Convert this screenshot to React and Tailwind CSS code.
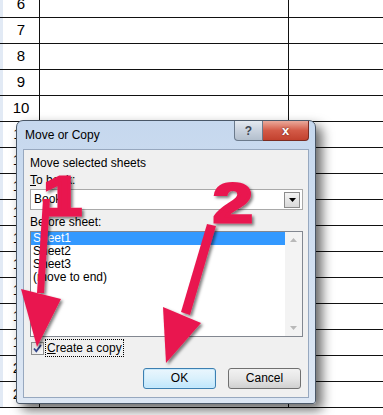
import React from "react";

const rows = [6, 7, 8, 9, 10, 11, 12, 13, 14, 15, 16, 17, 18, 19, 20, 21];

const Sheet = () => (
    <div className="flex flex-col mt-[-8px]">
        {rows.map((n) => (
            <div key={n} className="flex h-[26px] border-b border-[#111] box-border">
                <div className="w-[3px] bg-[#e2eaf5]" />
                <div className="w-[37px] border-r border-[#111] flex items-center justify-center text-[15px] text-black">
                    {n}
                </div>
                <div className="w-[249px] border-r border-[#111]" />
                <div className="flex-1" />
            </div>
        ))}
    </div>
);

const TitleButtons = () => (
    <div className="flex h-[20px] ml-auto">
        <div className="w-[29px] h-full border border-[#6b7a8c] border-t-0 rounded-bl-[4px] bg-gradient-to-b from-[#e4e9f0] via-[#c9d2de] to-[#b3bfcd] flex items-center justify-center text-[12px] font-bold text-[#3d4652]">
            ?
        </div>
        <div className="w-[46px] h-full border border-[#7a2c22] border-t-0 border-l-0 rounded-br-[4px] bg-gradient-to-b from-[#e9a99b] via-[#d35a47] to-[#c2412e] flex items-center justify-center text-[13px] font-bold text-white [text-shadow:0_0_2px_#5a1a10]">
            x
        </div>
    </div>
);

const Dialog = () => (
    <div className="absolute left-[16px] top-[120px] w-[300px] h-[284px] border border-[#4b5868] rounded-t-[7px] rounded-b-[3px] bg-gradient-to-b from-[#c6d8ee] to-[#dde7f4] shadow-[6px_6px_12px_rgba(0,0,0,0.6)] flex flex-col px-[6px] pb-[5px]">
        <div className="flex h-[28px] items-start">
            <span className="mt-[7px] ml-[2px] text-[12px] leading-[15px] text-black">Move or Copy</span>
            <TitleButtons />
        </div>

        <div className="flex-1 border border-[#97a8bf] bg-[#f0f0f0] flex flex-col pl-[6px] pr-[5px] pt-[6px] text-[12px] leading-[15px] text-black">
            <div>Move selected sheets</div>
            <div className="mt-[2px]"><span className="underline">T</span>o book:</div>

            <div className="mt-[1px] h-[21px] border border-[#a9a9a9] bg-white flex items-center pl-[3px] pr-[2px]">
                <span>Book1</span>
                <div className="ml-auto w-[16px] h-[16px] border border-[#8c8c8c] bg-gradient-to-b from-[#f4f4f4] to-[#d9d9d9] flex items-center justify-center">
                    <svg width="7" height="4" viewBox="0 0 7 4"><path d="M0 0h7L3.5 4z" fill="#000" /></svg>
                </div>
            </div>

            <div className="mt-[5px]">Be<span className="underline">f</span>ore sheet:</div>

            <div className="mt-[1px] h-[106px] border border-[#828790] bg-white flex">
                <div className="flex-1 flex flex-col leading-[13px]">
                    <div className="bg-[#3399ff] text-white pl-[2px] h-[13px]">Sheet1</div>
                    <div className="pl-[2px] h-[13px]">Sheet2</div>
                    <div className="pl-[2px] h-[13px]">Sheet3</div>
                    <div className="pl-[2px] h-[13px]">(move to end)</div>
                </div>
                <div className="w-[17px] bg-[#f3f3f3] flex flex-col items-center justify-between py-[6px]">
                    <svg width="7" height="4" viewBox="0 0 7 4"><path d="M0 4h7L3.5 0z" fill="#b9b9b9" /></svg>
                    <svg width="7" height="4" viewBox="0 0 7 4"><path d="M0 0h7L3.5 4z" fill="#b9b9b9" /></svg>
                </div>
            </div>

            <div className="mt-[2px] h-[18px] flex items-center">
                <div className="ml-[1px] w-[13px] h-[13px] border border-[#8e8f8f] bg-gradient-to-br from-[#dcdcdc] to-[#fbfbfb] flex items-center justify-center">
                    <svg width="9" height="9" viewBox="0 0 9 9"><path d="M1 4.5l2.3 2.8L8 1" stroke="#33468a" strokeWidth="1.8" fill="none" /></svg>
                </div>
                <div className="ml-[1px] px-[1px] h-[18px] border border-dotted border-black flex items-center">
                    <span className="underline">C</span>reate a copy
                </div>
            </div>

            <div className="mt-[11px] flex justify-end gap-[12px] mr-[2px]">
                <div className="w-[73px] h-[21px] rounded-[3px] border border-[#3c7fb1] bg-gradient-to-b from-[#eaf6fd] via-[#d9f0fc] to-[#bee6fd] shadow-[inset_0_0_0_1px_#c8e9fb] flex items-center justify-center">
                    OK
                </div>
                <div className="w-[73px] h-[21px] rounded-[3px] border border-[#707070] bg-gradient-to-b from-[#f2f2f2] via-[#e6e6e6] to-[#d0d0d0] flex items-center justify-center">
                    Cancel
                </div>
            </div>
        </div>
    </div>
);

const Arrows = () => (
    <svg className="absolute inset-0 pointer-events-none" width="383" height="415" viewBox="0 0 383 415">
        <defs>
            <filter id="sh" x="-20%" y="-20%" width="140%" height="140%">
                <feDropShadow dx="2" dy="2" stdDeviation="1.5" floodColor="#000" floodOpacity="0.5" />
            </filter>
        </defs>
        <g fill="#e9184f" filter="url(#sh)">
            {/* arrow 1 */}
            <polygon points="43,199 50,199 44,293 37,293" />
            <polygon points="21,289 61,299 37,347" />
            {/* arrow 2 */}
            <polygon points="207,224 216,226 190,315 181,312" />
            <polygon points="163,307 201,323 166,363" />
            <text x="43" y="215" fontSize="56" fontWeight="700" fontFamily="'Liberation Sans', Arial, sans-serif" stroke="#e9184f" strokeWidth="3" transform="translate(43 215) scale(1.25 1) translate(-43 -215)">1</text>
            <text x="213" y="222" fontSize="55" fontWeight="700" fontFamily="'Liberation Sans', Arial, sans-serif" stroke="#e9184f" strokeWidth="3" transform="translate(213 222) scale(1.3 1) translate(-213 -222)">2</text>
        </g>
    </svg>
);

export default function App() {
    return (
        <div className="relative w-[383px] h-[415px] overflow-hidden bg-white font-['Liberation_Sans',Arial,sans-serif]">
            <Sheet />
            <Dialog />
            <Arrows />
        </div>
    );
}
